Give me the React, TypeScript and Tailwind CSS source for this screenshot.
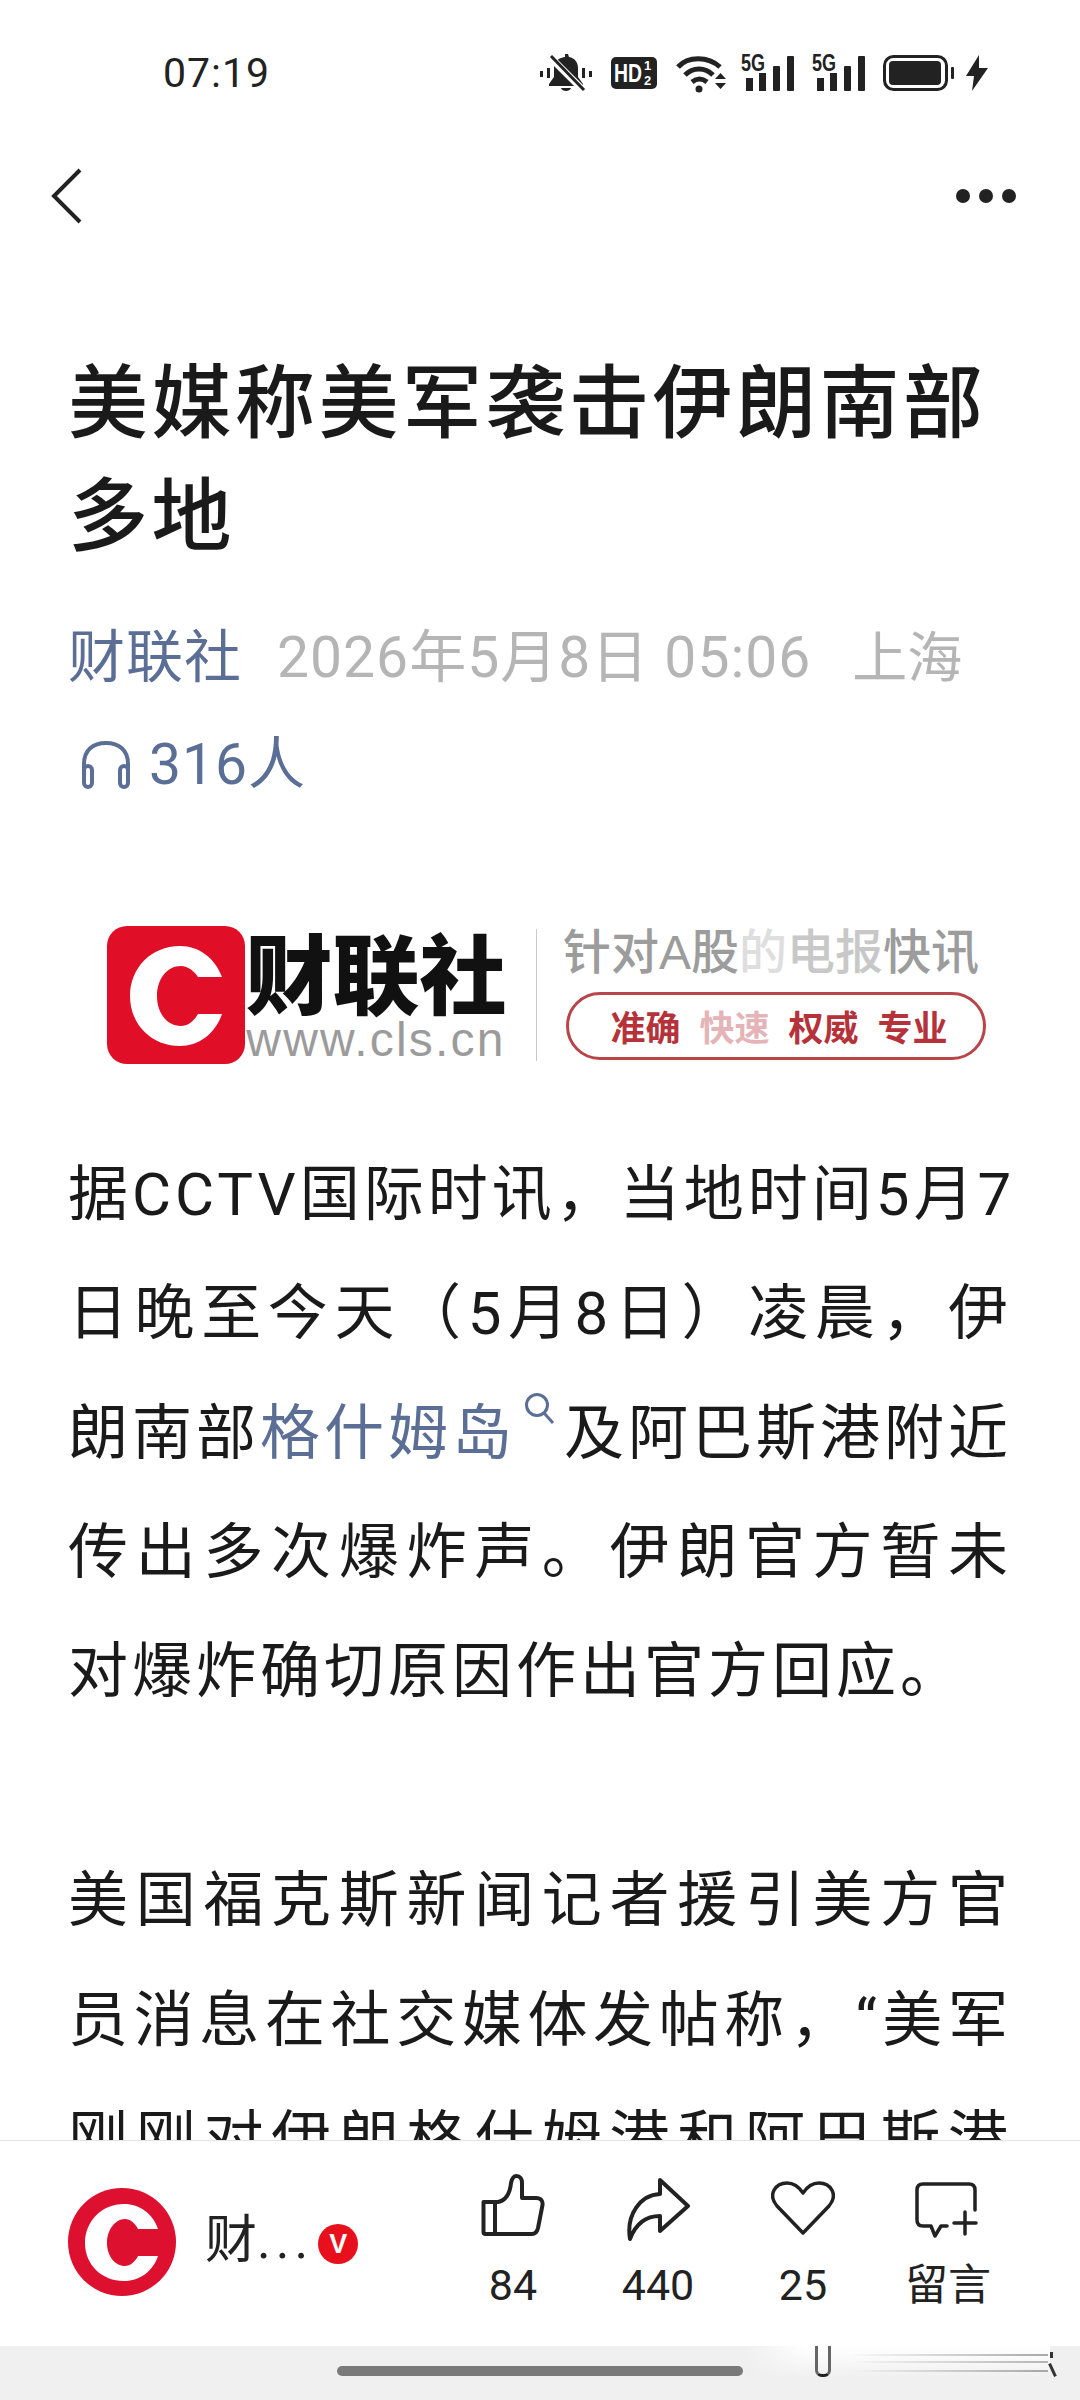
const cjk = "font-['Roboto','Noto_Sans_CJK_SC',sans-serif]"

const bodyTop = [
  '据CCTV国际时讯\uFF0C当地时间5月7',
  '日晚至今天\uFF085月8日\uFF09凌晨\uFF0C伊',
]
const bodyRest = ['传出多次爆炸声。伊朗官方暂未']
const bodyTwo = ['美国福克斯新闻记者援引美方官', '员消息在社交媒体发帖称\uFF0C\u201C美军', '刚刚对伊朗格什姆港和阿巴斯港']

function StatusIcons() {
  return (
    <div className="flex items-center text-[#222]">
      {/* muted bell */}
      <svg width="56" height="40" viewBox="0 0 56 40" className="mr-[17px]">
        <path d="M2 18h3v6H2zM9 15h3v10H9zM44 15h3v10h-3zM51 18h3v6h-3z" fill="#222" />
        <path d="M27 1h3l1 3c6 1 9 6 9 11v9l5 7v2H11v-2l5-7v-9c0-6 4-10 11-11zM23 35h10c-1 4-9 4-10 0z" fill="#222" />
        <path d="M12 4l34 34" stroke="#fff" strokeWidth="7" />
        <path d="M13 3l33 34" stroke="#222" strokeWidth="3" />
      </svg>
      <svg width="46" height="32" viewBox="0 0 46 32" className="mr-[19px]">
        <rect width="46" height="32" rx="5" fill="#222" />
        <text x="3" y="25" fontSize="26" fontWeight="700" fill="#fff" fontFamily="Liberation Sans" textLength="28" lengthAdjust="spacingAndGlyphs">HD</text>
        <text x="33" y="13" fontSize="13" fontWeight="700" fill="#fff" fontFamily="Liberation Sans">1</text>
        <text x="33" y="28" fontSize="13" fontWeight="700" fill="#fff" fontFamily="Liberation Sans">2</text>
      </svg>
      <svg width="50" height="40" viewBox="0 0 50 40" className="mr-[15px]">
        <path d="M2 14C12 3 32 3 44 14M9 22c8-8 20-8 28 0M16 29c5-4 10-4 15 0" fill="none" stroke="#222" strokeWidth="5" />
        <circle cx="23" cy="36" r="3.500" fill="#222" />
        <path d="M39 26h11l-5.500-6zM39 30h11l-5.500 6z" fill="#222" />
      </svg>
      <Signal />
      <div className="w-[18px]" />
      <Signal />
      <svg width="72" height="36" viewBox="0 0 72 36" className="ml-[18px] mr-[11px]">
        <rect x="1.500" y="1.500" width="62" height="33" rx="9" fill="none" stroke="#222" strokeWidth="3" />
        <rect x="6" y="6" width="52" height="24" rx="4" fill="#222" />
        <rect x="68" y="12" width="3" height="12" rx="1" fill="#222" />
      </svg>
      <svg width="22" height="36" viewBox="0 0 22 36">
        <path d="M13 0L0 21h8l-2 15L22 13h-9z" fill="#222" />
      </svg>
    </div>
  )
}

function Signal() {
  return (
    <svg width="53" height="48" viewBox="0 -8 53 48" className="mb-[8px]">
      <text x="0" y="18" fontSize="24" fontWeight="700" fill="#222" fontFamily="Liberation Sans" textLength="24" lengthAdjust="spacingAndGlyphs">5G</text>
      <rect x="5" y="25" width="7" height="13" fill="#222" />
      <rect x="18" y="20" width="7" height="18" fill="#222" />
      <rect x="32" y="13" width="7" height="25" rx="1" fill="#222" />
      <rect x="46" y="3" width="7" height="35" rx="1" fill="#222" />
    </svg>
  )
}

function Headphones() {
  return (
    <svg width="52" height="50" viewBox="0 0 52 50" fill="none" stroke="#5b6f96" strokeWidth="4" strokeLinecap="round">
      <path d="M4 34V24C4 10 13 3 26 3s22 7 22 21v10" />
      <rect x="4" y="26" width="8" height="21" rx="4" />
      <rect x="40" y="26" width="8" height="21" rx="4" />
    </svg>
  )
}

function BannerImage() {
  return (
    <div className="flex h-[138px] mt-[123px] ml-[39px] items-stretch">
      <svg width="138" height="138" viewBox="0 0 138 138" className="shrink-0">
        <rect width="138" height="138" rx="20" fill="#e00f27" />
        <path
          d="M115 51C108 32 92 20 73 20C44 20 23 42 23 70C23 98 44 120 73 120C92 120 108 108 115 88L91 88C87 95 81 100 74 100C60 100 50 87 50 70C50 53 60 40 74 40C81 40 87 45 91 51Z"
          fill="#fff"
        />
      </svg>
      <div className="w-[262px] flex flex-col items-center shrink-0">
        <span className="text-[87px] leading-[88px] font-black text-[#111] font-['Noto_Sans_CJK_SC',sans-serif] whitespace-nowrap">财联社</span>
        <span className="text-[48px] leading-[44px] mt-[4px] text-[#9b9b9b] font-['Liberation_Sans',sans-serif] tracking-[2.200px] whitespace-nowrap">www.cls.cn</span>
      </div>
      <div className="w-px bg-[#c9c9c9] ml-[29px] my-[3px]" />
      <div className="ml-[26px] flex flex-col w-[426px]">
        <div className="text-[48px] leading-[50px] mt-[2px] font-medium whitespace-nowrap font-['Liberation_Sans','Noto_Sans_CJK_SC',sans-serif] text-[#9c9c9c]">
          针对A股<span className="text-[#dedede]">的</span><span className="text-[#c8c8c8]">电报</span>快讯
        </div>
        <div className="mt-[14px] ml-[3px] h-[68px] w-[420px] pl-[6px] border-[3px] border-[#b8454a] rounded-[34px] flex items-center justify-center gap-[19px] text-[35px] font-bold text-[#b5323a] font-['Noto_Sans_CJK_SC',sans-serif]">
          <span>准确</span>
          <span className="text-[#e4b4b8]">快速</span>
          <span>权威</span>
          <span>专业</span>
        </div>
      </div>
    </div>
  )
}

function ActionItem({ label, children }: { label: string; children: React.ReactNode }) {
  return (
    <div className="w-[100px] flex flex-col items-center">
      <div className="h-[72px] flex items-start">{children}</div>
      <span className={`mt-[15px] text-[43px] leading-[48px] text-[#222] ${cjk}`}>{label}</span>
    </div>
  )
}

export default function App() {
  return (
    <div className={`relative w-[1080px] h-[2400px] flex flex-col overflow-hidden bg-white ${cjk}`}>
      <div className="flex-1 min-h-0 overflow-hidden">
        {/* status bar */}
        <div className="h-[144px] flex justify-between items-center pl-[163px] pr-[92px] pt-[2px]">
          <span className="text-[41px] leading-none text-[#222] font-['Roboto',sans-serif] tracking-[1px]">07:19</span>
          <StatusIcons />
        </div>

        {/* nav */}
        <div className="h-[104px] flex items-center justify-between pl-[48px] pr-[64px]">
          <svg width="36" height="60" viewBox="0 0 36 60" fill="none" stroke="#222" strokeWidth="4">
            <path d="M32 4L6 30l26 26" />
          </svg>
          <div className="flex gap-[9px]">
            <span className="w-[14px] h-[14px] rounded-full bg-[#222]" />
            <span className="w-[14px] h-[14px] rounded-full bg-[#222]" />
            <span className="w-[14px] h-[14px] rounded-full bg-[#222]" />
          </div>
        </div>

        <article className="pl-[68px] pr-[68px]">
          <h1 className="mt-[100px] text-[80px] leading-[113px] font-medium text-[#1a1a1a] tracking-[3.500px]">
            美媒称美军袭击伊朗南部<br />多地
          </h1>

          <div className="mt-[46px] flex items-center text-[57px] leading-[76px] whitespace-nowrap tracking-[1px]">
            <span className="text-[#5b6f96]">财联社</span>
            <span className="ml-[35px] text-[#b5b5b5]">2026年5月8日 05:06</span>
            <span className="ml-[41px] text-[55px] tracking-normal text-[#b5b5b5]">上海</span>
          </div>
          <div className="mt-[31px] flex items-center text-[57px] leading-[76px] text-[#5b6f96] pl-[12px] tracking-[1px]">
            <Headphones />
            <span className="ml-[17px]">316人</span>
          </div>

          <BannerImage />

          <div className="mt-[71px] text-[#1a1a1a] text-[60px] leading-[119.300px] tracking-[4px]">
            {bodyTop.map((line) => (
              <p key={line} className="[text-align-last:justify] whitespace-nowrap">{line}</p>
            ))}
            <p className="flex items-start justify-between whitespace-nowrap">
              <span>朗南部<span className="text-[#5b6f96]">格什姆岛</span></span>
              <svg width="32" height="32" viewBox="0 0 32 32" fill="none" stroke="#5b6f96" strokeWidth="3" className="mt-[19px] shrink-0">
                <circle cx="13" cy="12" r="10.500" />
                <path d="M20 20l9 10" />
              </svg>
              <span>及阿巴斯港附近</span>
            </p>
            {bodyRest.map((line) => (
              <p key={line} className="[text-align-last:justify] whitespace-nowrap">{line}</p>
            ))}
            <p className="whitespace-nowrap">对爆炸确切原因作出官方回应。</p>
            <div className="h-[110px]" />
            {bodyTwo.map((line) => (
              <p key={line} className="[text-align-last:justify] whitespace-nowrap">{line}</p>
            ))}
          </div>
        </article>
      </div>

      {/* bottom action bar */}
      <div className="h-[206px] shrink-0 border-t border-[#e4e4e4] bg-white flex items-start pl-[68px] pr-[82px]">
        <svg width="108" height="108" viewBox="0 0 108 108" className="mt-[47px] shrink-0">
          <circle cx="54" cy="54" r="54" fill="#dd1030" />
          <path
            d="M90 41C85 26 72 16 56 16C34 16 17 33 17 55C17 77 34 93 56 93C72 93 85 83 90 68L70 68C67 74 62 78 57 78C47 78 39 68 39 55C39 42 47 31 57 31C62 31 67 35 70 41Z"
            fill="#fff"
          />
        </svg>
        <span className="mt-[70px] ml-[29px] text-[52px] leading-[60px] text-[#222] whitespace-nowrap">
          财<span className="tracking-[5px]">...</span>
        </span>
        <span className="mt-[83px] ml-[5px] w-[40px] h-[40px] rounded-full bg-[#e8101c] text-white text-[27px] leading-[40px] font-bold text-center font-['Liberation_Sans',sans-serif]">V</span>
        <div className="ml-auto mt-[33px] flex gap-[45px]">
          <ActionItem label="84">
            <svg width="64" height="62" viewBox="0 0 64 62" fill="none" stroke="#222" strokeWidth="4" strokeLinejoin="round">
              <path d="M2.500 28H17C24 27 29 20 30 9C31 4 33 2 35.500 2C39 2 41 5 41 9V24H55C60 24 62 27 61.500 31L57 54C56 58 54 60 51 60H4.500C3 60 2.500 59 2.500 58V28ZM14 28V60" />
            </svg>
          </ActionItem>
          <ActionItem label="440">
            <svg width="64" height="64" viewBox="0 0 64 64" fill="none" stroke="#222" strokeWidth="4" strokeLinejoin="round" className="mt-[3px]">
              <path d="M34 3L62 29L34 54V39C21 39 10 46 4 62C0 38 14 18 34 17Z" />
            </svg>
          </ActionItem>
          <ActionItem label="25">
            <svg width="64" height="54" viewBox="0 0 64 54" fill="none" stroke="#222" strokeWidth="3.500" strokeLinejoin="round" className="mt-[7px]">
              <path d="M32 52L6 25C-4 13 5 2 16 2c7 0 12 4 16 10C36 6 41 2 48 2c11 0 20 11 10 23z" />
            </svg>
          </ActionItem>
          <ActionItem label="留言">
            <svg width="66" height="56" viewBox="0 0 66 56" fill="none" stroke="#222" strokeWidth="3.500" strokeLinecap="round" strokeLinejoin="round" className="mt-[8px]">
              <path d="M60 28V8c0-4-2-6-6-6H8C4 2 2 4 2 8v30c0 4 2 6 6 6h8l4 10 6-10h6" />
              <path d="M50 30v22M39 41h22" />
            </svg>
          </ActionItem>
        </div>
      </div>

      {/* gesture bar */}
      <div className="relative h-[54px] shrink-0 bg-[#f0f0f0]">
        <div className="absolute left-[337px] top-[20px] w-[406px] h-[10px] rounded-full bg-[#7a7a7a]" />
        <div className="absolute left-[745px] top-0 w-[305px] h-[32px] bg-linear-to-b from-white to-[#f0f0f0] [mask-image:linear-gradient(to_right,transparent,black_20%)]" />
        <div className="absolute left-[850px] top-[8px] w-[198px] h-[2px] bg-linear-to-r from-transparent to-[#a8a8a8]" />
        <div className="absolute left-[850px] top-[15px] w-[198px] h-[2px] bg-linear-to-r from-transparent to-[#b4b4b4]" />
        <div className="absolute left-[850px] top-[24px] w-[198px] h-[2px] bg-linear-to-r from-transparent to-[#a8a8a8]" />
        <div className="absolute left-[815px] top-0 w-[16px] h-[31px] border-x-[3px] border-b-[3px] border-x-[#666] border-b-[#222] rounded-b-[7px]" />
        <div className="absolute left-[1050px] top-[6px] w-[3px] h-[6px] bg-[#333]" />
        <div className="absolute left-[1051px] top-[17px] w-[3px] h-[14px] bg-[#333] -rotate-[25deg]" />
      </div>
    </div>
  )
}
